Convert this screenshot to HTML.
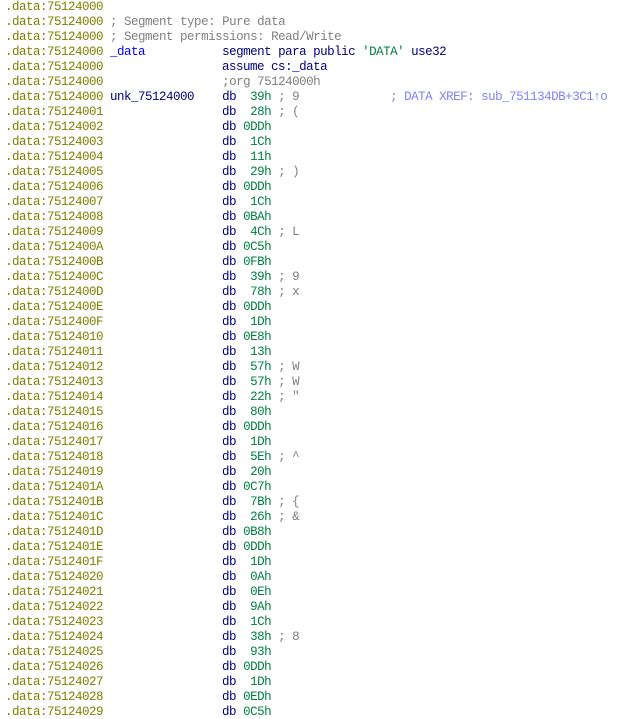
<!DOCTYPE html>
<html><head><meta charset="utf-8"><style>
html,body{margin:0;padding:0;background:#fff;width:629px;height:719px;overflow:hidden}
pre{margin:0;padding:0 0 0 5px;font-family:"Liberation Mono",monospace;font-size:12.5px;letter-spacing:-0.5px;line-height:15px;color:#000080;white-space:pre}
.a{color:#808000}.c{color:#808080}.n{color:#0000ff}.g{color:#008040}.x{color:#8080ff}.k{color:#000080}.b{color:#000000}
</style></head><body><pre><span class="a">.data:75124000</span>
<span class="a">.data:75124000</span> <span class="c">; Segment type: Pure data</span>
<span class="a">.data:75124000</span> <span class="c">; Segment permissions: Read/Write</span>
<span class="a">.data:75124000</span> <span class="n">_data</span>           segment para public <span class="g">'DATA'</span> use32
<span class="a">.data:75124000</span>                 assume cs:_data
<span class="a">.data:75124000</span>                 <span class="c">;org 75124000h</span>
<span class="a">.data:75124000</span> <span class="k">unk_75124000</span>    db  <span class="g">39h</span> <span class="c">; 9</span>             <span class="x">; DATA XREF: sub_751134DB+3C1↑o</span>
<span class="a">.data:75124001</span>                 db  <span class="g">28h</span> <span class="c">; (</span>
<span class="a">.data:75124002</span>                 db <span class="g">0DDh</span>
<span class="a">.data:75124003</span>                 db  <span class="g">1Ch</span>
<span class="a">.data:75124004</span>                 db  <span class="g">11h</span>
<span class="a">.data:75124005</span>                 db  <span class="g">29h</span> <span class="c">; )</span>
<span class="a">.data:75124006</span>                 db <span class="g">0DDh</span>
<span class="a">.data:75124007</span>                 db  <span class="g">1Ch</span>
<span class="a">.data:75124008</span>                 db <span class="g">0BAh</span>
<span class="a">.data:75124009</span>                 db  <span class="g">4Ch</span> <span class="c">; L</span>
<span class="a">.data:7512400A</span>                 db <span class="g">0C5h</span>
<span class="a">.data:7512400B</span>                 db <span class="g">0FBh</span>
<span class="a">.data:7512400C</span>                 db  <span class="g">39h</span> <span class="c">; 9</span>
<span class="a">.data:7512400D</span>                 db  <span class="g">78h</span> <span class="c">; x</span>
<span class="a">.data:7512400E</span>                 db <span class="g">0DDh</span>
<span class="a">.data:7512400F</span>                 db  <span class="g">1Dh</span>
<span class="a">.data:75124010</span>                 db <span class="g">0E8h</span>
<span class="a">.data:75124011</span>                 db  <span class="g">13h</span>
<span class="a">.data:75124012</span>                 db  <span class="g">57h</span> <span class="c">; W</span>
<span class="a">.data:75124013</span>                 db  <span class="g">57h</span> <span class="c">; W</span>
<span class="a">.data:75124014</span>                 db  <span class="g">22h</span> <span class="c">; "</span>
<span class="a">.data:75124015</span>                 db  <span class="g">80h</span>
<span class="a">.data:75124016</span>                 db <span class="g">0DDh</span>
<span class="a">.data:75124017</span>                 db  <span class="g">1Dh</span>
<span class="a">.data:75124018</span>                 db  <span class="g">5Eh</span> <span class="c">; ^</span>
<span class="a">.data:75124019</span>                 db  <span class="g">20h</span>
<span class="a">.data:7512401A</span>                 db <span class="g">0C7h</span>
<span class="a">.data:7512401B</span>                 db  <span class="g">7Bh</span> <span class="c">; {</span>
<span class="a">.data:7512401C</span>                 db  <span class="g">26h</span> <span class="c">; &amp;</span>
<span class="a">.data:7512401D</span>                 db <span class="g">0B8h</span>
<span class="a">.data:7512401E</span>                 db <span class="g">0DDh</span>
<span class="a">.data:7512401F</span>                 db  <span class="g">1Dh</span>
<span class="a">.data:75124020</span>                 db  <span class="g">0Ah</span>
<span class="a">.data:75124021</span>                 db  <span class="g">0Eh</span>
<span class="a">.data:75124022</span>                 db  <span class="g">9Ah</span>
<span class="a">.data:75124023</span>                 db  <span class="g">1Ch</span>
<span class="a">.data:75124024</span>                 db  <span class="g">38h</span> <span class="c">; 8</span>
<span class="a">.data:75124025</span>                 db  <span class="g">93h</span>
<span class="a">.data:75124026</span>                 db <span class="g">0DDh</span>
<span class="a">.data:75124027</span>                 db  <span class="g">1Dh</span>
<span class="a">.data:75124028</span>                 db <span class="g">0EDh</span>
<span class="a">.data:75124029</span>                 db <span class="g">0C5h</span>
</pre></body></html>
